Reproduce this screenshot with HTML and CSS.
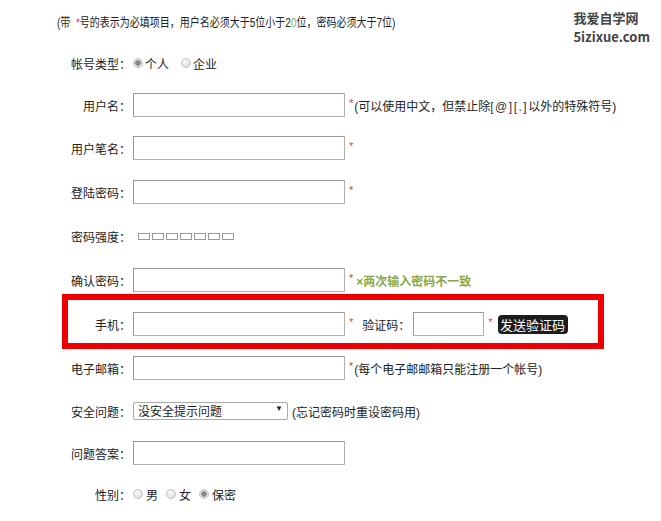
FILE: index.html
```html
<!DOCTYPE html>
<html lang="zh-CN">
<head>
  <meta charset="UTF-8" />
  <meta name="viewport" content="width=device-width, initial-scale=1.0" />
  <title>用户注册</title>
  <link rel="stylesheet" href="styles.css">
</head>
<body>
  <div class="logo">
    <div>我爱自学网</div>
    <div>5izixue.com</div>
  </div>

  <form class="reg-form">
    <div class="row row-tip">
      <p class="tip">(带 &nbsp;<span class="star-tip">*</span>号的表示为必填项目，用户名必须大于5位小于2<span class="green">0</span>位，密码必须大于7位)</p>
    </div>

    <div class="row row-short">
      <label class="label">帐号类型：</label>
      <label class="radio"><input type="radio" name="type" checked>个人</label>
      <label class="radio radio-gap"><input type="radio" name="type">企业</label>
    </div>

    <div class="row row-short">
      <label class="label">用户名：</label>
      <input class="text-input" type="text">
      <span class="star">*</span><span class="hint">(可以使用中文，但禁止除<span class="sym">[@][.]</span>以外的特殊符号)</span>
    </div>

    <div class="row">
      <label class="label">用户笔名：</label>
      <input class="text-input" type="text">
      <span class="star">*</span>
    </div>

    <div class="row">
      <label class="label">登陆密码：</label>
      <input class="text-input" type="password">
      <span class="star">*</span>
    </div>

    <div class="row">
      <label class="label">密码强度：</label>
      <div class="strength">
        <span></span><span></span><span></span><span></span><span></span><span></span><span></span>
      </div>
    </div>

    <div class="row">
      <label class="label">确认密码：</label>
      <input class="text-input" type="password">
      <span class="star">*</span><span class="error">×两次输入密码不一致</span>
    </div>

    <div class="row">
      <label class="label">手机：</label>
      <input class="text-input" type="text">
      <span class="star">*</span>
      <label class="code-label">验证码：</label>
      <input class="text-input code-input" type="text">
      <span class="star">*</span>
      <button type="button" class="send-btn">发送验证码</button>
    </div>

    <div class="row">
      <label class="label">电子邮箱：</label>
      <input class="text-input" type="text">
      <span class="star">*</span><span class="hint">(每个电子邮邮箱只能注册一个帐号)</span>
    </div>

    <div class="row row-short">
      <label class="label">安全问题：</label>
      <div class="select-wrap">
        <select class="select">
          <option>没安全提示问题</option>
        </select>
        <span class="arrow">▼</span>
      </div>
      <span class="hint hint-select">(忘记密码时重设密码用)</span>
    </div>

    <div class="row row-short">
      <label class="label">问题答案：</label>
      <input class="text-input" type="text">
    </div>

    <div class="row row-last">
      <label class="label">性别：</label>
      <label class="radio radio-sex"><input type="radio" name="sex">男</label>
      <label class="radio radio-sex"><input type="radio" name="sex">女</label>
      <label class="radio radio-sex"><input type="radio" name="sex" checked>保密</label>
    </div>

    <div class="highlight"></div>
  </form>
</body>
</html>
```

FILE: styles.css
```css
body {
  margin: 0;
  font-family: "Liberation Sans", "Noto Sans CJK SC", sans-serif;
  font-size: 12px;
  color: #222;
  background: #fff;
}

.reg-form {
  position: relative;
  display: flex;
  flex-direction: column;
}

.row {
  display: flex;
  align-items: center;
  height: 44px;
}

.row-tip {
  height: 42px;
  padding-left: 57px;
}

.row-short {
  height: 42px;
}

.row-last {
  height: 40px;
}

.tip {
  margin: 0;
  white-space: nowrap;
  transform: scaleX(0.8);
  transform-origin: left center;
  font-size: 12.5px;
}

.star-tip {
  color: #d44;
}

.green {
  color: #7cae5a;
}

.label {
  width: 131px;
  text-align: right;
  flex-shrink: 0;
  margin-right: 2px;
}

.text-input {
  width: 212px;
  height: 24px;
  box-sizing: border-box;
  border: 1px solid #b0b0b0;
  border-top-color: #999;
  border-left-color: #999;
  padding: 0 3px;
  margin: 0;
  font-size: 12px;
}

.star {
  color: #c44;
  font-size: 11px;
  margin: -5px 1px 0 4px;
}

.hint {
  color: #222;
}

.sym {
  letter-spacing: 1.5px;
  color: #333;
}

.hint-select {
  margin-left: 4px;
}

.error {
  color: #8aa84a;
  font-weight: bold;
  margin-left: 2px;
}

.radio {
  display: flex;
  align-items: center;
}

.radio-gap {
  margin-left: 12px;
}

.radio input {
  appearance: none;
  width: 10px;
  height: 10px;
  margin: 0 2px 0 0;
  border-radius: 50%;
  border: 1px solid #c4c4c4;
  background: radial-gradient(circle at 40% 35%, #fafafa, #d6d6d6);
}

.radio input:checked {
  background: radial-gradient(circle, #888 0 2.5px, #e2e2e2 3px);
}

.radio-sex {
  margin-right: 8px;
}

.radio-sex input {
  margin-right: 3px;
}

.strength {
  display: flex;
  gap: 2px;
  margin-left: 5px;
}

.strength span {
  width: 12px;
  height: 7px;
  box-sizing: border-box;
  border: 1px solid #9a9a9a;
}

.code-label {
  margin-left: 8px;
}

.code-input {
  width: 71px;
  margin-left: 3px;
}

.send-btn {
  margin-left: 4px;
  height: 19px;
  width: 70px;
  padding: 0;
  border: none;
  border-radius: 4px;
  background: #1c1c1c;
  color: #fff;
  font-family: "Noto Sans CJK SC", sans-serif;
  font-size: 13px;
  line-height: 19px;
}

.select-wrap {
  position: relative;
}

.select {
  appearance: none;
  width: 155px;
  height: 18px;
  box-sizing: border-box;
  border: 1px solid #a9a9a9;
  border-radius: 2px;
  background: #fff;
  padding: 0 4px;
  margin: 0;
  font-family: "Noto Sans CJK SC", sans-serif;
  font-size: 12px;
  line-height: 16px;
  color: #222;
}

.arrow {
  position: absolute;
  right: 5px;
  top: 2px;
  font-size: 8px;
  color: #222;
  pointer-events: none;
}

.highlight {
  position: absolute;
  left: 62px;
  top: 294px;
  width: 542px;
  height: 55px;
  box-sizing: border-box;
  border: 6px solid #ee0000;
  pointer-events: none;
}

.logo {
  position: absolute;
  top: 8px;
  right: 11px;
  font-family: "Noto Sans CJK SC", sans-serif;
  font-weight: bold;
  font-size: 13px;
  line-height: 19px;
  color: #444;
}
```
